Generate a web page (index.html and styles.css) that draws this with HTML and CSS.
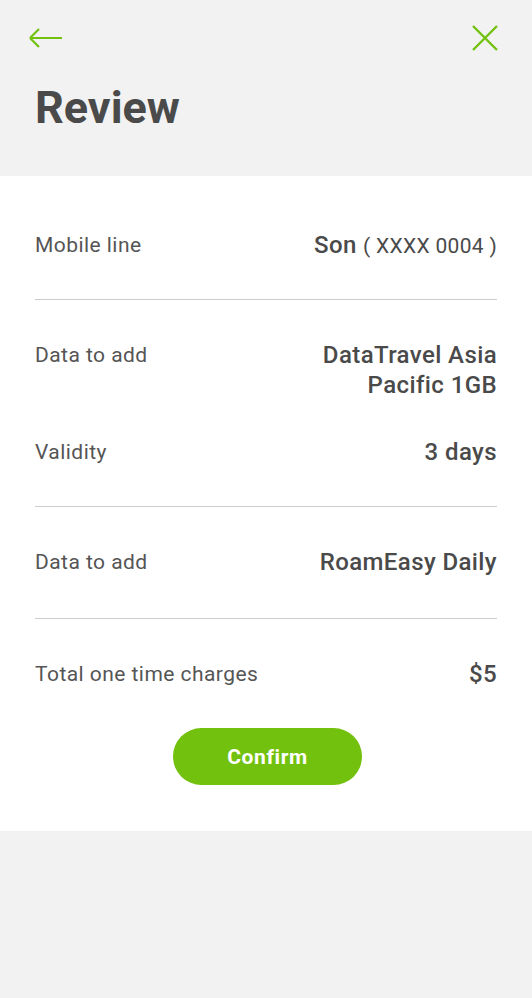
FILE: index.html
```html
<!DOCTYPE html>
<html lang="en">
<head>
<meta charset="utf-8">
<link rel="stylesheet" href="styles.css">
</head>
<body>
<div class="page">
  <header class="header">
    <div class="nav">
      <button class="icon-btn" aria-label="Back">
        <svg width="34" height="20" viewBox="0 0 34 20"><path d="M1 10H33M1 10L10 1M1 10L10 19" fill="none" stroke="#72c10e" stroke-width="2.2"/></svg>
      </button>
      <button class="icon-btn" aria-label="Close">
        <svg width="26" height="26" viewBox="0 0 26 26"><path d="M1 1L25 25M25 1L1 25" fill="none" stroke="#72c10e" stroke-width="2.4"/></svg>
      </button>
    </div>
    <h1 class="title">Review</h1>
  </header>
  <main class="card">
    <section class="section">
      <div class="row">
        <span class="label">Mobile line</span>
        <span class="value">Son <span class="light">( XXXX 0004 )</span></span>
      </div>
    </section>
    <section class="section">
      <div class="row">
        <span class="label">Data to add</span>
        <span class="value">DataTravel Asia<br>Pacific 1GB</span>
      </div>
      <div class="row">
        <span class="label">Validity</span>
        <span class="value">3 days</span>
      </div>
    </section>
    <section class="section roomy">
      <div class="row">
        <span class="label">Data to add</span>
        <span class="value">RoamEasy Daily</span>
      </div>
    </section>
    <section class="section last">
      <div class="row">
        <span class="label">Total one time charges</span>
        <span class="value">$5</span>
      </div>
      <div class="actions">
        <button class="confirm">Confirm</button>
      </div>
    </section>
  </main>
</div>
</body>
</html>
```
FILE: styles.css
```css
* { box-sizing: border-box; }
html, body { margin: 0; padding: 0; }
body {
  background: #f2f2f2;
  font-family: Roboto, "Liberation Sans", sans-serif;
  color: #4a4a4a;
  width: 532px;
  min-height: 998px;
}
.header {
  height: 176px;
  padding: 25px 34px 0 29px;
}
.nav {
  display: flex;
  justify-content: space-between;
  align-items: center;
  height: 26px;
}
.icon-btn {
  background: none;
  border: 0;
  padding: 0;
  display: flex;
  cursor: pointer;
}
.title {
  margin: 27px 0 0 6px;
  font-size: 45px;
  font-weight: 700;
  line-height: 60px;
  color: #4a4a4a;
  letter-spacing: 0;
}
.card {
  background: #fff;
  padding: 14px 35px 46px;
}
.section {
  padding: 40px 0 38px;
  border-bottom: 1px solid #cccccc;
  display: flex;
  flex-direction: column;
  gap: 37px;
}
.section + .section { padding-bottom: 39px; }
.section.roomy { padding-bottom: 41px; }
.section.last {
  border-bottom: 0;
  padding-bottom: 0;
  gap: 39px;
}
.row {
  display: flex;
  justify-content: space-between;
  align-items: flex-start;
}
.label {
  font-size: 21px;
  line-height: 30px;
  color: #555;
  letter-spacing: 0.45px;
}
.value {
  font-size: 24px;
  line-height: 30px;
  font-weight: 500;
  text-align: right;
  color: #4a4a4a;
  letter-spacing: 0.4px;
}
.light {
  font-weight: 400;
  font-size: 21px;
  letter-spacing: 0.3px;
}
.actions {
  display: flex;
  justify-content: center;
  padding-left: 3px;
}
.confirm {
  width: 189px;
  height: 57px;
  border: 0;
  border-radius: 29px;
  background: #72c10e;
  color: #fff;
  font-family: Roboto, "Liberation Sans", sans-serif;
  font-size: 21px;
  font-weight: 700;
  letter-spacing: 0.6px;
  cursor: pointer;
}
```
